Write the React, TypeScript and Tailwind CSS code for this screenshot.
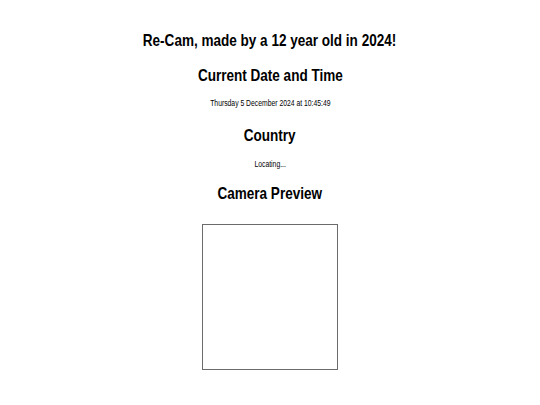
const heading = 'text-[16.5px] font-bold leading-[20px] scale-x-[0.82]';
const small = 'text-[8.3px] leading-[10px] scale-x-[0.82]';

export default function App() {
  return (
    <main
      className="min-h-screen bg-white text-black flex flex-col items-center pt-[30px]"
      style={{ fontFamily: '"Liberation Sans", Arial, sans-serif' }}
    >
      <h1 className={heading}>Re-Cam, made by a 12 year old in 2024!</h1>
      <h2 className={`mt-[15px] ${heading}`}>Current Date and Time</h2>
      <p className={`mt-[13px] ${small}`}>Thursday 5 December 2024 at 10:45:49</p>
      <h2 className={`mt-[17px] ${heading}`}>Country</h2>
      <p className={`mt-[14px] ${small}`}>Locating...</p>
      <h2 className={`mt-[14px] ${heading}`}>Camera Preview</h2>
      <div className="mt-[21px] w-[136px] h-[146px] border border-[#6b6b6b]" />
    </main>
  );
}
